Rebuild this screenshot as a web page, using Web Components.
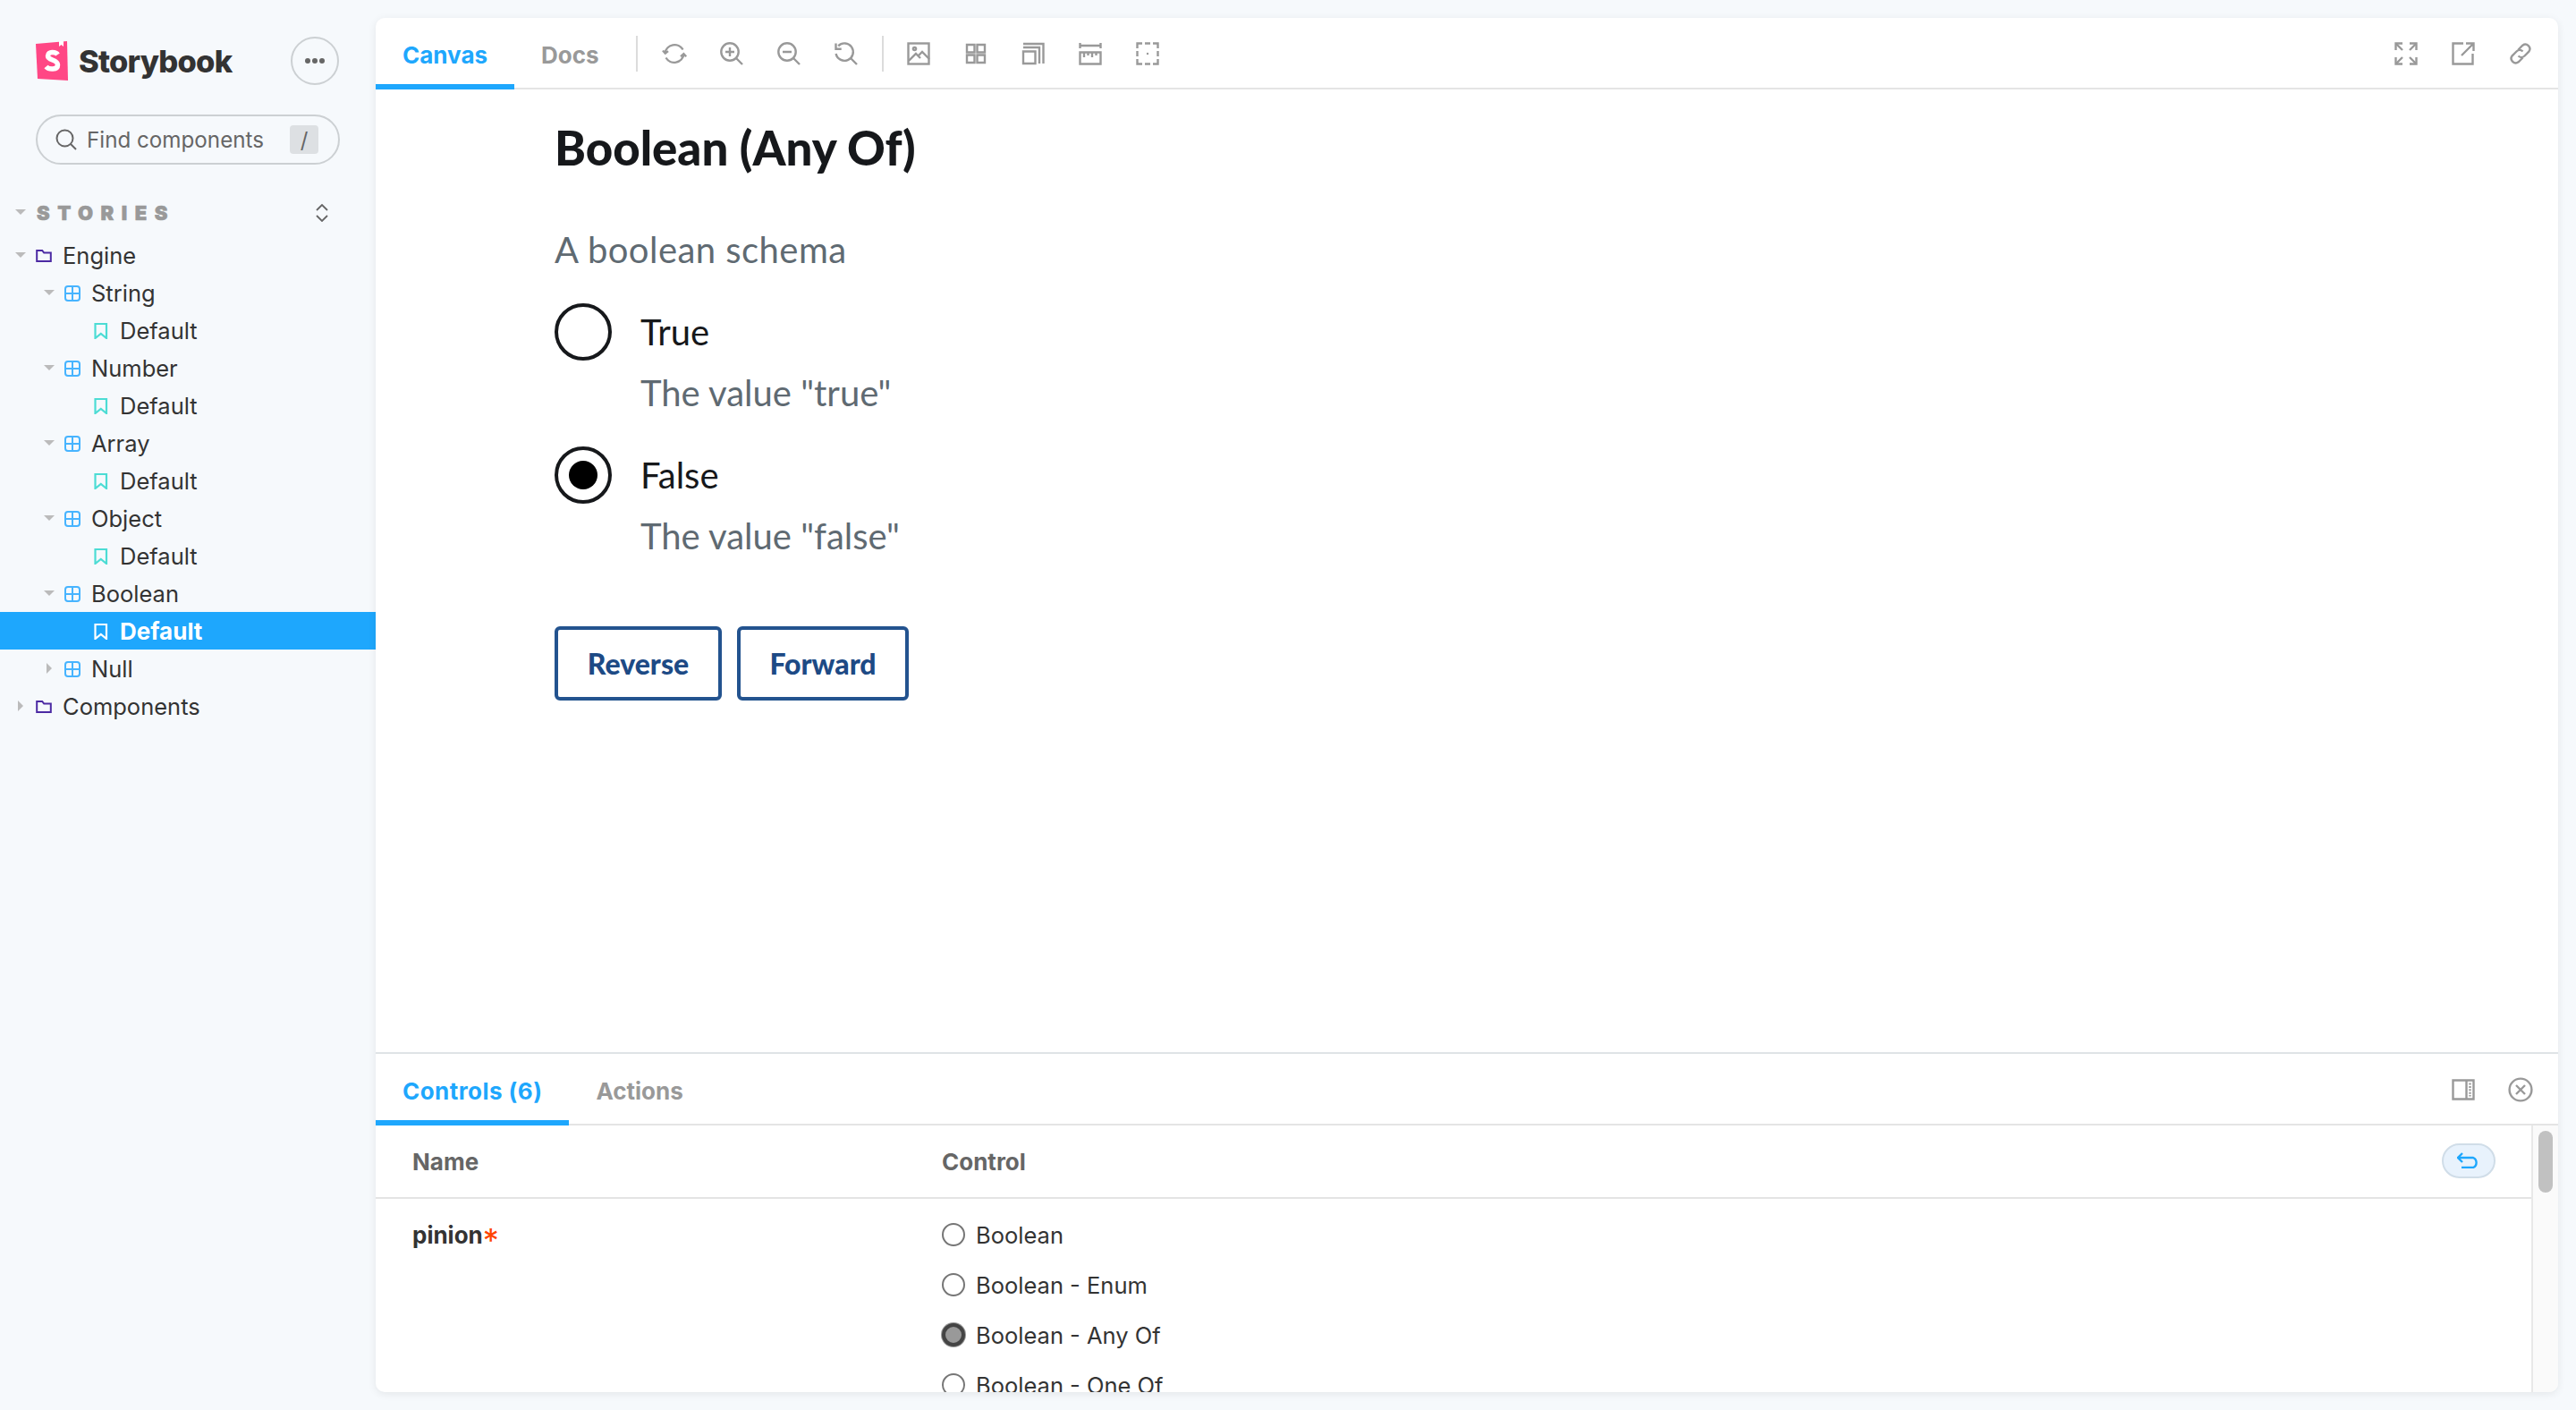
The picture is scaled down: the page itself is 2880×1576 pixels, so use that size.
<!DOCTYPE html>
<html lang="en">
<head>
<meta charset="utf-8" />
<title>Storybook</title>
<style>
  html, body { margin: 0; height: 100%; background: #f6f9fc; }
  body { font-family: Inter, "Liberation Sans", sans-serif; color: #333; overflow: hidden; }
</style>
</head>
<body>
<sb-app>
  <sb-sidebar slot="sidebar">
    <sb-tree-row depth="0" kind="folder" arrow="open">Engine</sb-tree-row>
    <sb-tree-row depth="1" kind="component" arrow="open">String</sb-tree-row>
    <sb-tree-row depth="2" kind="story">Default</sb-tree-row>
    <sb-tree-row depth="1" kind="component" arrow="open">Number</sb-tree-row>
    <sb-tree-row depth="2" kind="story">Default</sb-tree-row>
    <sb-tree-row depth="1" kind="component" arrow="open">Array</sb-tree-row>
    <sb-tree-row depth="2" kind="story">Default</sb-tree-row>
    <sb-tree-row depth="1" kind="component" arrow="open">Object</sb-tree-row>
    <sb-tree-row depth="2" kind="story">Default</sb-tree-row>
    <sb-tree-row depth="1" kind="component" arrow="open">Boolean</sb-tree-row>
    <sb-tree-row depth="2" kind="story" selected>Default</sb-tree-row>
    <sb-tree-row depth="1" kind="component" arrow="closed">Null</sb-tree-row>
    <sb-tree-row depth="0" kind="folder" arrow="closed">Components</sb-tree-row>
  </sb-sidebar>
  <sb-toolbar slot="main"></sb-toolbar>
  <sb-preview slot="main"></sb-preview>
  <sb-addons slot="main"></sb-addons>
</sb-app>

<script>
const ICONS = {
  sync: `<path d="M2.500 12.500A10.800 10.800 0 0 1 22.500 8.500M23.500 13.500A10.800 10.800 0 0 1 3.500 17.500"/><path d="M0 9.500l2.800 3.200 3.200-2.600M20 16.200l3.400-3 2.800 3"/>`,
  zoomin: `<circle cx="11" cy="11" r="9.700"/><path d="M18 18l7 7M6 11h10M11 6v10"/>`,
  zoomout: `<circle cx="11" cy="11" r="9.700"/><path d="M18 18l7 7M6 11h10"/>`,
  zoomreset: `<path d="M4.200 4.300A9.700 9.700 0 1 1 1.600 13"/><path d="M18 18l7 7M1.500 1.500v6.200h6.200"/>`,
  image: `<rect x="1.500" y="1.500" width="23" height="23"/><circle cx="8.500" cy="7.500" r="1.600"/><path d="M2 21l8-8 5 5M12 16l5-5 8 8"/>`,
  grid: `<path d="M3 3h8.500v8.500H3zM14.500 3h8.500v8.500h-8.500zM3 14.500h8.500v8.500H3zM14.500 14.500h8.500v8.500h-8.500z"/>`,
  outline: `<path d="M2 10.500h13.500v13.500H2zM2 6h18v18M2 2h22.500v22"/>`,
  ruler: `<path d="M1.500 1v6M24.500 1v6M1.500 4h23"/><path d="M1.500 11.500h23v13h-23zM6 12v5M10.500 12v3M15 12v5M19.500 12v3" />`,
  dashed: `<path d="M1.500 7V1.500H7M10 1.500h6M19 1.500h5.500V7M24.500 10v6M24.500 19v5.500H19M16 24.500h-6M7 24.500H1.500V19M1.500 16v-6"/><circle cx="13" cy="13" r="1.200" fill="#999" stroke="none"/>`,
  expand: `<path d="M2 2l7 7M24 2l-7 7M2 24l7-7M24 24l-7-7"/><path d="M1.500 9V1.500H9M17 1.500h7.500V9M1.500 17v7.500H9M17 24.500h7.500V17"/>`,
  open: `<path d="M23.500 13v11.500h-22v-23H13"/><path d="M11 15L24 2M16 1.500h8.500V10"/>`,
  link: `<path d="M10.500 8.500l4.800-4.800a5 5 0 0 1 7 7l-4.800 4.800a5 5 0 0 1-7 0"/><path d="M15.500 17.500l-4.800 4.800a5 5 0 0 1-7-7l4.800-4.800a5 5 0 0 1 7 0"/>`,
  panel: `<path d="M1.500 2.500h23v21h-23zM16.500 2.500v21"/><path d="M20.500 5.500v15" stroke-dasharray="2 1.400"/>`,
  close: `<circle cx="13" cy="13" r="12.400"/><path d="M8 8l10 10M18 8L8 18"/>`,
};

const iconTemplate = document.createElement("template");
iconTemplate.innerHTML = `
  <style>
    :host { display: block; width: 26px; height: 26px; }
    svg { display: block; width: 100%; height: 100%; overflow: visible; fill: none; stroke: #999; stroke-width: 2.400; }
  </style>
  <svg viewBox="0 0 26 26"></svg>
`;

class SbIcon extends HTMLElement {
  constructor() {
    super();
    this.attachShadow({ mode: "open" });
    this.shadowRoot.appendChild(iconTemplate.content.cloneNode(true));
  }

  connectedCallback() {
    this.shadowRoot.querySelector("svg").innerHTML = ICONS[this.getAttribute("name")];
  }
}

customElements.define("sb-icon", SbIcon);

const appTemplate = document.createElement("template");
appTemplate.innerHTML = `
  <style>
    :host { display: grid; grid-template-columns: 420px 1fr; height: 1576px; background: #f6f9fc; }
    .main {
      display: flex;
      flex-direction: column;
      margin: 20px 20px 20px 0;
      height: 1536px;
      background: #fff;
      border-radius: 10px;
      overflow: hidden;
      box-shadow: 0 2px 10px rgba(0, 0, 0, 0.08);
    }
  </style>
  <slot name="sidebar"></slot>
  <div class="main"><slot name="main"></slot></div>
`;

class SbApp extends HTMLElement {
  constructor() {
    super();
    this.attachShadow({ mode: "open" });
    this.shadowRoot.appendChild(appTemplate.content.cloneNode(true));
  }
}

customElements.define("sb-app", SbApp);

const sidebarTemplate = document.createElement("template");
sidebarTemplate.innerHTML = `
  <style>
    :host { display: block; font-family: Inter, "Liberation Sans", sans-serif; }
    .brand { display: flex; align-items: center; height: 54px; margin: 41px 41px 0 40px; }
    .logo { width: 36px; height: 46px; flex: none; }
    .name { margin-left: 12px; font-size: 34.500px; font-weight: 800; color: #333; letter-spacing: -0.800px; flex: 1; }
    .menu {
      width: 54px; height: 54px; box-sizing: border-box; border: 2px solid #ccd0d3; border-radius: 50%;
      display: flex; align-items: center; justify-content: center; gap: 2px;
    }
    .menu i { width: 6px; height: 6px; border-radius: 50%; background: #666; }
    .search {
      display: flex; align-items: center; height: 56px; box-sizing: border-box; margin: 33px 40px 0;
      border: 2px solid #ccd0d3; border-radius: 28px; padding: 0 22px 0 20px; color: #666; font-size: 24.200px;
    }
    .search svg { width: 24px; height: 24px; fill: none; stroke: #666; stroke-width: 2; flex: none; }
    .search span { margin-left: 11px; flex: 1; }
    .search kbd {
      width: 32px; height: 32px; border-radius: 4px; background: #dde0e3; color: #666; font: 24px Inter, sans-serif;
      display: flex; align-items: center; justify-content: center;
    }
    .head { display: flex; align-items: center; height: 42px; margin-top: 33px; padding: 0 53px 0 17px; }
    .head .tri {
      width: 0; height: 0; border: 6px solid transparent; border-top: 6px solid #bbb; border-bottom: 0; margin-top: -2px;
    }
    .head b {
      margin-left: 12px; font-size: 22px; font-weight: 900; letter-spacing: 8.500px; color: #999; flex: 1;
      -webkit-text-stroke: 0.600px #999;
    }
    .head svg { width: 14px; height: 20px; fill: none; stroke: #666; stroke-width: 1.800; }
    .tree { margin-top: 5px; }
  </style>
  <div class="brand">
    <svg class="logo" viewBox="0 0 36 46">
      <path d="M0 4L35 1 36 45 2 43Z" fill="#ff4785" />
      <path d="M26 1l0 6 2.500-2 2.500 2 0-6Z" fill="#fff" />
      <path d="M24.500 16c-2-3-11-4-11 1.500 0 5.500 11 3.500 11 10 0 6-10 5.500-13 2" fill="none" stroke="#fff" stroke-width="5.500" />
    </svg>
    <div class="name">Storybook</div>
    <div class="menu"><i></i><i></i><i></i></div>
  </div>
  <div class="search">
    <svg viewBox="0 0 24 24"><circle cx="10.500" cy="10.500" r="9" /><path d="M17 17l6 6" /></svg>
    <span>Find components</span>
    <kbd>/</kbd>
  </div>
  <div class="head">
    <span class="tri"></span>
    <b>STORIES</b>
    <svg viewBox="0 0 14 20"><path d="M1 7l6-6 6 6M1 13l6 6 6-6" /></svg>
  </div>
  <div class="tree"><slot></slot></div>
`;

class SbSidebar extends HTMLElement {
  constructor() {
    super();
    this.attachShadow({ mode: "open" });
    this.shadowRoot.appendChild(sidebarTemplate.content.cloneNode(true));
  }
}

customElements.define("sb-sidebar", SbSidebar);

const KIND_ICONS = {
  folder: `<path d="M1.200 3h6l2 2.500h7.600v9.500H1.200z" fill="none" stroke="#4c2aa3" stroke-width="2"/>`,
  component: `<rect x="1" y="1" width="16" height="16" rx="3" fill="none" stroke="#47b4ff" stroke-width="2"/><path d="M9 1v16M1 9h16" stroke="#47b4ff" stroke-width="2"/>`,
  story: `<path d="M2.500 1h12.500v16l-6.200-5-6.300 5z" fill="none" stroke="#4cdcd4" stroke-width="2.200"/>`,
};

const rowTemplate = document.createElement("template");
rowTemplate.innerHTML = `
  <style>
    :host {
      display: flex;
      align-items: center;
      height: 42px;
      padding-left: calc(17px + var(--depth, 0) * 32px);
      font-size: 25.500px;
      color: #333;
    }
    .arrow { width: 12px; flex: none; display: flex; justify-content: center; }
    .arrow i { display: block; width: 0; height: 0; }
    :host([arrow="open"]) .arrow i { border: 6px solid transparent; border-top: 6px solid #bbb; border-bottom: 0; }
    :host([arrow="closed"]) .arrow i { border: 6px solid transparent; border-left: 6px solid #bbb; border-right: 0; }
    svg { width: 18px; height: 18px; margin: 2px 12px 0 11px; flex: none; }
    :host([selected]) { background: #1ea7fd; color: #fff; font-weight: 700; font-size: 26px; }
    :host([selected]) svg path { stroke: #fff; }
  </style>
  <span class="arrow"><i></i></span>
  <svg viewBox="0 0 18 18"></svg>
  <slot></slot>
`;

class SbTreeRow extends HTMLElement {
  constructor() {
    super();
    this.attachShadow({ mode: "open" });
    this.shadowRoot.appendChild(rowTemplate.content.cloneNode(true));
  }

  connectedCallback() {
    this.style.setProperty("--depth", this.getAttribute("depth"));
    this.shadowRoot.querySelector("svg").innerHTML = KIND_ICONS[this.getAttribute("kind")];
  }
}

customElements.define("sb-tree-row", SbTreeRow);

const tabTemplate = document.createElement("template");
tabTemplate.innerHTML = `
  <style>
    :host {
      display: flex; align-items: center; box-sizing: border-box; height: 100%; padding: 2px 30px 0;
      font-size: 26px; font-weight: 700; color: #999;
    }
    :host([active]) { color: #1ea7fd; box-shadow: inset 0 -6px 0 #1ea7fd; }
  </style>
  <slot></slot>
`;

class SbTab extends HTMLElement {
  constructor() {
    super();
    this.attachShadow({ mode: "open" });
    this.shadowRoot.appendChild(tabTemplate.content.cloneNode(true));
  }
}

customElements.define("sb-tab", SbTab);

const toolbarTemplate = document.createElement("template");
toolbarTemplate.innerHTML = `
  <style>
    :host {
      display: flex; align-items: center; height: 80px; flex: none; box-sizing: border-box;
      border-bottom: 2px solid #e4e4e4; font-family: Inter, "Liberation Sans", sans-serif;
    }
    .tabs { display: flex; height: 80px; align-self: flex-start; }
    .sep { width: 2px; height: 40px; background: #dcdcdc; flex: none; margin-top: 2px; }
    .btn { width: 64px; display: flex; justify-content: center; flex: none; margin-top: 2px; }
    .right { margin-left: auto; margin-right: 10px; display: flex; }
  </style>
  <div class="tabs"><sb-tab active>Canvas</sb-tab><sb-tab>Docs</sb-tab></div>
  <div class="sep" style="margin-left: 11px"></div>
  <div class="btn" style="margin-left: 9px"><sb-icon name="sync"></sb-icon></div>
  <div class="btn"><sb-icon name="zoomin"></sb-icon></div>
  <div class="btn"><sb-icon name="zoomout"></sb-icon></div>
  <div class="btn"><sb-icon name="zoomreset"></sb-icon></div>
  <div class="sep" style="margin-left: 8px"></div>
  <div class="btn" style="margin-left: 7px"><sb-icon name="image"></sb-icon></div>
  <div class="btn"><sb-icon name="grid"></sb-icon></div>
  <div class="btn"><sb-icon name="outline"></sb-icon></div>
  <div class="btn"><sb-icon name="ruler"></sb-icon></div>
  <div class="btn"><sb-icon name="dashed"></sb-icon></div>
  <div class="right">
    <div class="btn"><sb-icon name="expand"></sb-icon></div>
    <div class="btn"><sb-icon name="open"></sb-icon></div>
    <div class="btn"><sb-icon name="link"></sb-icon></div>
  </div>
`;

class SbToolbar extends HTMLElement {
  constructor() {
    super();
    this.attachShadow({ mode: "open" });
    this.shadowRoot.appendChild(toolbarTemplate.content.cloneNode(true));
  }
}

customElements.define("sb-toolbar", SbToolbar);

const previewTemplate = document.createElement("template");
previewTemplate.innerHTML = `
  <style>
    :host {
      display: block; height: 1078px; flex: none; box-sizing: border-box; padding: 0 200px;
      font-family: Lato, "Liberation Sans", sans-serif; border-bottom: 2px solid #dfe3e6;
    }
    h1 { margin: 0; padding-top: 40px; font-size: 52.800px; line-height: 50px; font-weight: 900; color: #16181b; }
    .lead { margin: 65px 0 0; font-size: 40px; line-height: 48px; color: #5f6a72; letter-spacing: 0.450px; }
    .option { display: grid; grid-template-columns: 64px 1fr; column-gap: 32px; align-items: center; margin-top: 36px; }
    .ring { width: 64px; height: 64px; box-sizing: border-box; border: 4px solid #16181b; border-radius: 50%; display: flex; align-items: center; justify-content: center; }
    .ring i { width: 32px; height: 32px; border-radius: 50%; background: #000; }
    .label { font-size: 40px; color: #16181b; }
    .sub { grid-column: 2; margin-top: 12px; font-size: 40px; line-height: 48px; color: #5f6a72; }
    .actions { display: flex; gap: 17px; margin-top: 77px; }
    .actions div {
      height: 83px; box-sizing: border-box; border: 4px solid #23538f; border-radius: 6px;
      display: flex; align-items: center; justify-content: center; font-size: 32px; font-weight: 900; color: #1d4a85;
    }
  </style>
  <h1>Boolean (Any Of)</h1>
  <p class="lead">A boolean schema</p>
  <div class="option">
    <div class="ring"></div><div class="label">True</div>
    <div class="sub">The value "true"</div>
  </div>
  <div class="option">
    <div class="ring"><i></i></div><div class="label">False</div>
    <div class="sub">The value "false"</div>
  </div>
  <div class="actions"><div style="width: 187px">Reverse</div><div style="width: 192px">Forward</div></div>
`;

class SbPreview extends HTMLElement {
  constructor() {
    super();
    this.attachShadow({ mode: "open" });
    this.shadowRoot.appendChild(previewTemplate.content.cloneNode(true));
  }
}

customElements.define("sb-preview", SbPreview);

const radioTemplate = document.createElement("template");
radioTemplate.innerHTML = `
  <style>
    :host { display: flex; align-items: center; gap: 12px; height: 56px; font-size: 25.500px; color: #333; }
    i { width: 26px; height: 26px; box-sizing: border-box; border: 2px solid #767676; border-radius: 50%; flex: none; }
    :host([checked]) i { background: #999; border: 4px solid #444; box-shadow: 0 0 0 1px #999 inset, 0 0 0 1px #999; }
  </style>
  <i></i><slot></slot>
`;

class SbRadio extends HTMLElement {
  constructor() {
    super();
    this.attachShadow({ mode: "open" });
    this.shadowRoot.appendChild(radioTemplate.content.cloneNode(true));
  }
}

customElements.define("sb-radio", SbRadio);

const addonsTemplate = document.createElement("template");
addonsTemplate.innerHTML = `
  <style>
    :host {
      display: flex; flex-direction: column; flex: 1; min-height: 0; overflow: hidden;
      font-family: Inter, "Liberation Sans", sans-serif;
    }
    .bar { display: flex; align-items: center; height: 80px; flex: none; box-sizing: border-box; border-bottom: 2px solid #e4e4e4; }
    .tabs { display: flex; height: 80px; align-self: flex-start; }
    .btns { display: flex; margin-left: auto; margin-right: 10px; }
    .btn { width: 64px; display: flex; justify-content: center; margin-top: 2px; }
    .body { flex: 1; min-height: 0; display: flex; }
    .table { flex: 1; min-width: 0; }
    .row { display: grid; grid-template-columns: 591px 1fr; padding-left: 41px; }
    .thead {
      height: 82px; box-sizing: border-box; border-bottom: 2px solid #e4e4e4; align-items: center; font-size: 26px;
      font-weight: 700; color: #666; padding-right: 40px; grid-template-columns: 592px 1fr auto;
    }
    .undo {
      width: 60px; height: 39px; box-sizing: border-box; background: #e8f2fc; border: 2px solid #d0dde8; border-radius: 20px;
      display: flex; align-items: center; justify-content: center; margin-top: -2px;
    }
    .undo svg { width: 26px; height: 18px; fill: none; stroke: #1ea7fd; stroke-width: 2.400; }
    .pinion { padding-top: 26px; font-size: 26px; line-height: 30px; font-weight: 700; color: #333; }
    .pinion em { color: #ff4400; font-style: normal; font-weight: 400; font-size: 36px; line-height: 0; vertical-align: -9px; }
    .opts { padding-top: 12px; padding-left: 1px; }
    .track { width: 22px; flex: none; border-left: 2px solid #e8e8e8; background: #fafafa; padding: 6px 0 0 6px; }
    .thumb { width: 16px; height: 69px; border-radius: 8px; background: #c1c1c1; }
  </style>
  <div class="bar">
    <div class="tabs"><sb-tab active style="letter-spacing: 0.450px">Controls (6)</sb-tab><sb-tab>Actions</sb-tab></div>
    <div class="btns">
      <div class="btn"><sb-icon name="panel"></sb-icon></div>
      <div class="btn"><sb-icon name="close"></sb-icon></div>
    </div>
  </div>
  <div class="body">
    <div class="table">
      <div class="row thead">
        <span>Name</span><span>Control</span>
        <div class="undo"><svg viewBox="0 0 26 18"><path d="M6 1L1 6l5 5M1 6h17a6 6 0 0 1 0 11H5" /></svg></div>
      </div>
      <div class="row">
        <div class="pinion">pinion<em>*</em></div>
        <div class="opts">
          <sb-radio>Boolean</sb-radio>
          <sb-radio>Boolean - Enum</sb-radio>
          <sb-radio checked>Boolean - Any Of</sb-radio>
          <sb-radio>Boolean - One Of</sb-radio>
        </div>
      </div>
    </div>
    <div class="track"><div class="thumb"></div></div>
  </div>
`;

class SbAddons extends HTMLElement {
  constructor() {
    super();
    this.attachShadow({ mode: "open" });
    this.shadowRoot.appendChild(addonsTemplate.content.cloneNode(true));
  }
}

customElements.define("sb-addons", SbAddons);
</script>
</body>
</html>
